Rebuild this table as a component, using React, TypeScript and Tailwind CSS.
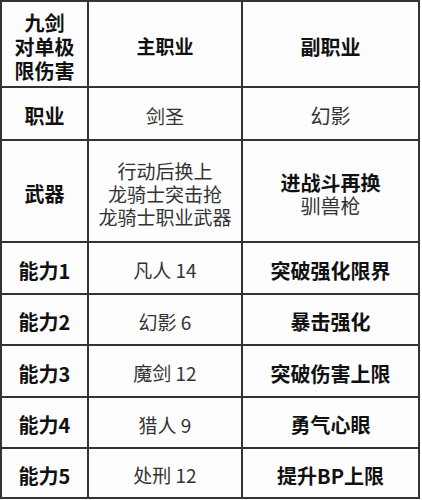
import React from 'react';

type Row = {
  label: React.ReactNode;
  main: React.ReactNode;
  sub: React.ReactNode;
  h: string;
};

const rows: Row[] = [
  {
    label: (
      <div className="flex flex-col items-center leading-[24px]">
        <span>九剑</span>
        <span>对单极</span>
        <span>限伤害</span>
      </div>
    ),
    main: <span className="font-bold text-[#111]">主职业</span>,
    sub: <span className="font-bold text-[#111]">副职业</span>,
    h: 'h-[84px]',
  },
  {
    label: '职业',
    main: '剑圣',
    sub: <span className="font-normal text-[#333]">幻影</span>,
    h: 'h-[51px]',
  },
  {
    label: '武器',
    main: (
      <div className="flex flex-col items-center leading-[23px]">
        <span>行动后换上</span>
        <span>龙骑士突击抢</span>
        <span>龙骑士职业武器</span>
      </div>
    ),
    sub: (
      <div className="flex flex-col items-center leading-[23px]">
        <span className="font-bold text-[#111]">进战斗再换</span>
        <span className="font-normal text-[#333]">驯兽枪</span>
      </div>
    ),
    h: 'h-[100px]',
  },
  { label: '能力1', main: '凡人 14', sub: '突破强化限界', h: 'h-[50px]' },
  { label: '能力2', main: '幻影 6', sub: '暴击强化', h: 'h-[49px]' },
  { label: '能力3', main: '魔剑 12', sub: '突破伤害上限', h: 'h-[50px]' },
  { label: '能力4', main: '猎人 9', sub: '勇气心眼', h: 'h-[49px]' },
  { label: '能力5', main: '处刑 12', sub: '提升BP上限', h: 'h-[48px]' },
];

export default function App() {
  return (
    <div
      className="w-[422px] h-[500px] bg-white"
      style={{ fontFamily: '"Noto Sans CJK SC", "Noto Sans", sans-serif' }}
    >
      <div className="w-[420px] bg-[#333] p-[2px] grid grid-cols-[85px_152px_175px] gap-[2px]">
        {rows.map((r, i) => (
          <React.Fragment key={i}>
            <div className={`${r.h} pt-[5px] bg-[#fdfdfd] flex items-center justify-center text-[20px] font-bold text-[#111]`}>
              {r.label}
            </div>
            <div className={`${r.h} pt-[5px] bg-[#fdfdfd] flex items-center justify-center text-[19px] font-normal text-[#333] whitespace-pre`}>
              {r.main}
            </div>
            <div className={`${r.h} pt-[5px] bg-[#fdfdfd] flex items-center justify-center text-[20px] font-bold text-[#111]`}>
              {r.sub}
            </div>
          </React.Fragment>
        ))}
      </div>
    </div>
  );
}
